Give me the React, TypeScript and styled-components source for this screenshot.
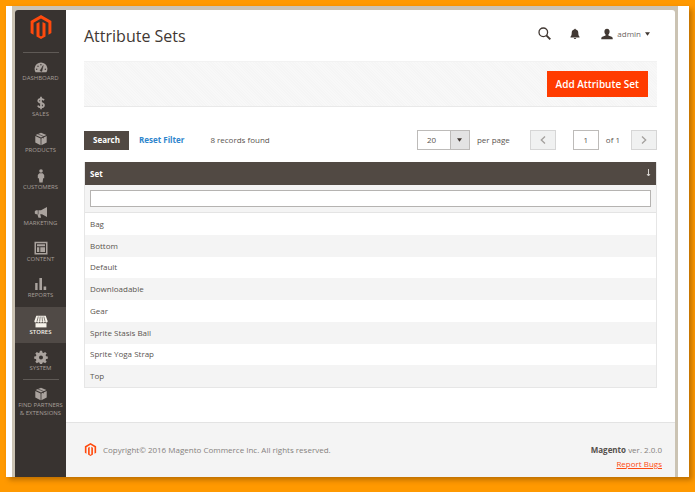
import React from "react";
import styled, { createGlobalStyle, css } from "styled-components";

const GlobalStyle = createGlobalStyle`
  *, *::before, *::after { box-sizing: border-box; }
  body {
    margin: 0;
    background: #ff9900;
    font-family: "Open Sans", "Noto Sans", sans-serif;
    font-size: 8px;
    line-height: 12px;
    color: #5a544f;
  }
  #root {
    min-height: 100vh;
    display: flex;
  }
  button, input, select { font: inherit; color: inherit; }
`;

const Sheet = styled.div`
  flex: 1;
  display: flex;
  margin: 6px 6px 15px;
  padding: 0 11px 0 6px;
  background: #ffffff;
  box-shadow: 3px 3px 5px rgba(90, 50, 0, 0.4);
`;

const Frame = styled.div`
  flex: 1;
  display: flex;
  padding: 4px 3px 0;
  background: #cbc3b3;
`;

const Admin = styled.div`
  flex: 1;
  display: flex;
  border-radius: 3px 3px 0 0;
  overflow: hidden;
  background: #ffffff;
`;

const Sidebar = styled.aside`
  flex: 0 0 51px;
  min-width: 0;
  display: flex;
  flex-direction: column;
  background: #383330;
`;

const Brand = styled.a`
  display: flex;
  justify-content: center;
  padding: 5px 0 13px;
`;

const Rule = styled.hr`
  width: 36px;
  height: 1px;
  margin: 0 auto;
  border: 0;
  background: #5f5a56;
`;

const Menu = styled.ul`
  display: grid;
  grid-auto-rows: 1fr;
  min-height: 326px;
  margin: 0;
  padding: 0;
  list-style: none;
`;

const MenuLink = styled.a<{ $active?: boolean }>`
  height: 100%;
  display: flex;
  flex-direction: column;
  align-items: center;
  padding-top: 7px;
  color: #a69f99;
  font-size: 6px;
  line-height: 8px;
  text-align: center;
  text-decoration: none;
  text-transform: uppercase;
  white-space: nowrap;
  svg { flex: none; color: #aaa39e; }
  ${(p) =>
    p.$active &&
    css`
      background: #504a46;
      color: #f7f3eb;
      font-weight: 600;
      svg { color: #f7f3eb; }
    `}
`;

const Page = styled.div`
  flex: 1;
  min-width: 0;
  display: flex;
  flex-direction: column;
`;

const Content = styled.main`
  flex: 1;
  padding: 0 18px;
`;

const Header = styled.header`
  display: flex;
  align-items: center;
  height: 51px;
  padding-right: 7px;
`;

const Title = styled.h1`
  flex: 1;
  margin: 0;
  font-size: 16px;
  line-height: 22px;
  font-weight: 400;
  color: #413833;
`;

const IconButton = styled.button`
  display: flex;
  align-items: center;
  margin: 0 0 4px;
  padding: 0;
  border: 0;
  background: none;
  color: #413833;
`;

const HeaderTools = styled.div`
  display: flex;
  align-items: center;
  gap: 19px;
`;

const UserButton = styled(IconButton)`
  gap: 4px;
  margin-left: 2px;
  span { color: #6d6763; }
`;

const ActionBar = styled.div`
  display: flex;
  justify-content: flex-end;
  align-items: center;
  height: 46px;
  padding-right: 9px;
  background: repeating-linear-gradient(45deg, #f5f5f5 0 1px, #f8f8f8 1px 2px);
  border-top: 1px solid #f2f2f2;
  border-bottom: 1px solid #e9e9e9;
`;

const PrimaryButton = styled.button`
  height: 26px;
  padding: 0 9px;
  border: 0;
  background: #ff3c00;
  color: #ffffff;
  font-size: 10px;
  font-weight: 600;
`;

const Toolbar = styled.div`
  display: flex;
  align-items: center;
  padding: 23px 0 12px;
`;

const SearchButton = styled.button`
  height: 19px;
  width: 45px;
  padding: 0;
  border: 0;
  background: #514943;
  color: #ffffff;
  font-weight: 700;
`;

const ResetButton = styled.button`
  margin: 0 26px 0 10px;
  padding: 0;
  border: 0;
  background: none;
  color: #2f86cd;
  font-weight: 700;
`;

const Records = styled.span`
  flex: 1;
`;

const Pager = styled.div`
  display: flex;
  align-items: center;
`;

const SelectBox = styled.span`
  display: grid;
  grid-template-columns: 1fr 19px;
  width: 53px;
  height: 20px;
  margin-right: 7px;
  border: 1px solid #bdbbb9;
  > * { grid-row: 1; }
  select {
    grid-column: 1 / -1;
    appearance: none;
    min-width: 0;
    padding: 0 0 0 9px;
    border: 0;
    border-radius: 0;
    background: transparent;
    outline: none;
    z-index: 1;
  }
`;

const SelectArrow = styled.span`
  grid-column: 2;
  display: grid;
  place-items: center;
  border-left: 1px solid #bdbbb9;
  background: #e3e3e3;
`;

const PageButton = styled.button`
  display: grid;
  place-items: center;
  width: 26px;
  height: 20px;
  padding: 0;
  border: 1px solid #d6d6d6;
  background: #f0f1f1;
  color: #a3a09d;
`;

const PageInput = styled.input`
  width: 26px;
  height: 20px;
  margin: 0 7px 0 17px;
  padding: 0 0 2px;
  border: 1px solid #bdbbb9;
  border-radius: 0;
  text-align: center;
`;

const PerPage = styled.label`
  margin-right: 20px;
`;

const PageTotal = styled.span`
  margin-right: 11px;
`;

const Grid = styled.table`
  width: 100%;
  height: 226px;
  border-collapse: separate;
  border-spacing: 0;
  border: 1px solid #e6e6e6;
  border-top: 0;
  line-height: 10px;
  th, td { padding: 0 5px; text-align: left; }
`;

const HeadRow = styled.tr`
  height: 23px;
  background: #514943;
  color: #ffffff;
`;

const HeadCell = styled.div`
  display: flex;
  justify-content: space-between;
`;

const FilterRow = styled.tr`
  height: 28px;
  background: #f4f4f4;
  td { border-bottom: 1px solid #e4e4e4; }
`;

const FilterInput = styled.input`
  display: block;
  width: 100%;
  height: 17px;
  padding: 0 4px;
  border: 1px solid #b5b3b1;
  border-radius: 0;
  background: #ffffff;
`;

const Row = styled.tr`
  background: #ffffff;
  &:nth-child(even) { background: #f4f4f4; }
`;

const Footer = styled.footer`
  display: flex;
  justify-content: space-between;
  align-items: flex-start;
  min-height: 55px;
  padding: 20px 13px 0 18px;
  border-top: 1px solid #e3e3e3;
  background: #f4f4f4;
  color: #85817d;
`;

const Copyright = styled.div`
  display: flex;
  align-items: center;
  gap: 6px;
`;

const Version = styled.div`
  text-align: right;
  line-height: 14px;
  strong { color: #55504c; }
  a { display: block; color: #ff4a12; }
`;

const MagentoMark = ({ size }: { size: number }) => (
  <svg width={size} height={size} viewBox="0 0 24 24" fill="#ff4a0d" aria-hidden="true">
    <path d="M12 0 1.6 6v12l2.97 1.72V7.72L12 3.43l7.43 4.29v12L22.4 18V6z" />
    <path d="M13.5 6.9v13.7L12 21.5l-1.5-.9V6.9L7.5 8.6v12.8L12 24l4.5-2.6V8.6z" />
  </svg>
);

const Glyph = ({ children }: { children: React.ReactNode }) => (
  <svg width="14" height="14" viewBox="0 0 14 14" fill="currentColor" aria-hidden="true">
    {children}
  </svg>
);

const cutout = "#383330";

const Box = () => (
  <Glyph>
    <path d="M7 .8 12.4 3 7 5.5 1.6 3z" />
    <path d="M1.3 4 6.6 6.4v6.8L1.3 10.6zM12.7 4 7.4 6.4v6.8l5.3-2.6z" />
    <path d="m4 2 5.500 2.400v2" fill="none" stroke={cutout} strokeWidth=".6" />
  </Glyph>
);

const menu: { label: string; icon: React.ReactNode; active?: boolean }[] = [
  {
    label: "Dashboard",
    icon: (
      <Glyph>
        <path d="M1.600 12.300A6.400 6.400 0 1 1 12.400 12.300z" />
        <path d="m6 10.800 3.200-5.300-1.400 6z" fill={cutout} stroke={cutout} strokeWidth=".5" />
        <g fill={cutout}>
          <circle cx="2.700" cy="9.300" r=".7" />
          <circle cx="4" cy="6.300" r=".7" />
          <circle cx="6.900" cy="4.700" r=".7" />
          <circle cx="11.300" cy="9.300" r=".7" />
        </g>
      </Glyph>
    ),
  },
  {
    label: "Sales",
    icon: (
      <Glyph>
        <path
          d="M10 4.3C9.300 3.200 8.300 2.800 7 2.800c-1.700 0-2.700.8-2.700 2 0 2.900 5.600 1.300 5.600 4.400 0 1.300-1.100 2.100-2.900 2.100-1.500 0-2.600-.6-3.200-1.700M7 .7v12.600"
          fill="none"
          stroke="currentColor"
          strokeWidth="1.800"
        />
      </Glyph>
    ),
  },
  { label: "Products", icon: <Box /> },
  {
    label: "Customers",
    icon: (
      <Glyph>
        <circle cx="7" cy="2" r="1.800" />
        <path d="M5.300 4.200h3.400L10.200 6v3.300H9.100L8.600 13.600H5.400L4.900 9.300H3.800V6z" />
      </Glyph>
    ),
  },
  {
    label: "Marketing",
    icon: (
      <Glyph>
        <path d="M13 2v10L8 9.300H6.200l.9 3.400H4.500L3.400 9.300H2L.8 8.400V6.200L2 5.300h5z" />
        <path d="M4.200 5v4.400" stroke={cutout} strokeWidth=".6" />
      </Glyph>
    ),
  },
  {
    label: "Content",
    icon: (
      <Glyph>
        <path d="M.5.8h13v12.600H.5zM2 2.300v9.600h10V2.300z" fillRule="evenodd" />
        <path d="M3 3.300h8v2H3zM3 6.300h2.300v4.600H3zM6.300 6.300H11v4.600H6.300z" />
      </Glyph>
    ),
  },
  {
    label: "Reports",
    icon: (
      <Glyph>
        <path d="M1.200 6h2.400v7H1.200zM5.400 1h2.600v12H5.400zM9.600 9.500h2.600V13H9.600z" />
      </Glyph>
    ),
  },
  {
    label: "Stores",
    active: true,
    icon: (
      <Glyph>
        <path d="M2.300 1.800h9.400l2 5.400c-.2 1.400-2.100 1.600-2.700.6-.6 1.100-2.100 1.100-2.700 0-.6 1.100-2.100 1.100-2.700 0-.6 1.100-2.100 1.100-2.700 0C2.300 8.800.5 8.600.3 7.200z" />
        <path d="M1.500 9.200h11v4.200h-11z" />
        <path d="M4.300 2.500 3 7.500M6.200 2.500l-.5 5M8 2.500l.5 5M9.800 2.500l1.300 5" stroke="#504a46" strokeWidth=".7" />
      </Glyph>
    ),
  },
  {
    label: "System",
    icon: (
      <Glyph>
        <path
          fillRule="evenodd"
          d="M5.900.7h2.200l.3 1.800 1.200.5 1.500-1.100 1.600 1.600L11.600 5l.5 1.200 1.700.3v2.200l-1.700.3-.5 1.200 1.100 1.500-1.600 1.600-1.500-1.100-1.200.5-.3 1.300H5.900l-.3-1.300-1.200-.5-1.500 1.100-1.600-1.600 1.100-1.500-.5-1.200-1.700-.3V6.500l1.700-.3L2.400 5 1.300 3.500l1.600-1.600L4.400 3l1.200-.5zM7 5.400a2 2 0 1 0 0 4 2 2 0 0 0 0-4z"
        />
      </Glyph>
    ),
  },
];

const sets = ["Bag", "Bottom", "Default", "Downloadable", "Gear", "Sprite Stasis Ball", "Sprite Yoga Strap", "Top"];

const Caret = () => (
  <svg width="5" height="4" viewBox="0 0 6 4" fill="#413833" aria-hidden="true">
    <path d="M0 0h6L3 4z" />
  </svg>
);

const Chevron = ({ d }: { d: string }) => (
  <svg width="6" height="8" viewBox="0 0 6 8" fill="none" stroke="currentColor" strokeWidth="1.300" aria-hidden="true">
    <path d={d} />
  </svg>
);

export default function App() {
  return (
    <>
      <GlobalStyle />
      <Sheet>
        <Frame>
          <Admin>
            <Sidebar>
              <Brand href="#" aria-label="Magento Admin">
                <MagentoMark size={24} />
              </Brand>
              <Rule />
              <nav>
                <Menu>
                  {menu.map((item) => (
                    <li key={item.label}>
                      <MenuLink href="#" $active={item.active}>
                        {item.icon}
                        {item.label}
                      </MenuLink>
                    </li>
                  ))}
                </Menu>
                <Rule />
                <MenuLink href="#">
                  <Box />
                  <span>
                    Find Partners
                    <br />
                    &amp; Extensions
                  </span>
                </MenuLink>
              </nav>
            </Sidebar>
            <Page>
              <Content>
                <Header>
                  <Title>Attribute Sets</Title>
                  <HeaderTools>
                    <IconButton aria-label="Search">
                      <svg width="13" height="13" viewBox="0 0 13 13" fill="none" stroke="currentColor">
                        <circle cx="5.300" cy="5.300" r="4.300" strokeWidth="1.300" />
                        <path d="m8.300 8.300 4 4" strokeWidth="1.900" />
                      </svg>
                    </IconButton>
                    <IconButton aria-label="Notifications">
                      <svg width="10" height="12" viewBox="0 0 10 12" fill="currentColor">
                        <path d="M5 .8c.6 0 .8.4.8.8C7.700 2 8.300 3.500 8.300 5c0 2 .4 2.800 1.200 3.700v.8H.5v-.8C1.300 7.800 1.700 7 1.700 5c0-1.500.6-3 2.500-3.400 0-.4.2-.8.8-.8zM3.800 10.100h2.400c-.2 1.300-2.200 1.300-2.400 0z" />
                      </svg>
                    </IconButton>
                    <UserButton>
                      <svg width="12" height="12" viewBox="0 0 12 12" fill="currentColor" aria-hidden="true">
                        <path d="M6 .8c1.700 0 2.600 1.200 2.600 2.700 0 1.300-.5 2.400-1.200 3v1.100c1.500.6 4 1 4.300 2.400v1.300H.3V10c.3-1.400 2.800-1.800 4.300-2.400V6.500c-.7-.6-1.200-1.700-1.200-3C3.400 2 4.300.8 6 .8z" />
                      </svg>
                      <span>admin</span>
                      <Caret />
                    </UserButton>
                  </HeaderTools>
                </Header>
                <ActionBar>
                  <PrimaryButton>Add Attribute Set</PrimaryButton>
                </ActionBar>
                <Toolbar>
                  <SearchButton>Search</SearchButton>
                  <ResetButton>Reset Filter</ResetButton>
                  <Records>8 records found</Records>
                  <Pager>
                    <SelectBox>
                      <SelectArrow>
                        <Caret />
                      </SelectArrow>
                      <select id="per-page" defaultValue="20">
                        <option>20</option>
                        <option>30</option>
                        <option>50</option>
                      </select>
                    </SelectBox>
                    <PerPage htmlFor="per-page">per page</PerPage>
                    <PageButton aria-label="Previous page">
                      <Chevron d="M5 .5 1.300 4 5 7.500" />
                    </PageButton>
                    <PageInput aria-label="Page" defaultValue="1" />
                    <PageTotal>of 1</PageTotal>
                    <PageButton aria-label="Next page">
                      <Chevron d="M1 .5 4.700 4 1 7.500" />
                    </PageButton>
                  </Pager>
                </Toolbar>
                <Grid>
                  <thead>
                    <HeadRow>
                      <th scope="col">
                        <HeadCell>
                          Set
                          <svg width="5" height="8" viewBox="0 0 5 8" fill="none" stroke="#d8d4d0" aria-hidden="true">
                            <path d="M2.500 0v6.500M1 5l1.500 2L4 5" />
                          </svg>
                        </HeadCell>
                      </th>
                    </HeadRow>
                    <FilterRow>
                      <td>
                        <FilterInput aria-label="Filter by set" />
                      </td>
                    </FilterRow>
                  </thead>
                  <tbody>
                    {sets.map((name) => (
                      <Row key={name}>
                        <td>{name}</td>
                      </Row>
                    ))}
                  </tbody>
                </Grid>
              </Content>
              <Footer>
                <Copyright>
                  <MagentoMark size={13} />
                  Copyright© 2016 Magento Commerce Inc. All rights reserved.
                </Copyright>
                <Version>
                  <strong>Magento</strong> ver. 2.0.0
                  <a href="#">Report Bugs</a>
                </Version>
              </Footer>
            </Page>
          </Admin>
        </Frame>
      </Sheet>
    </>
  );
}
